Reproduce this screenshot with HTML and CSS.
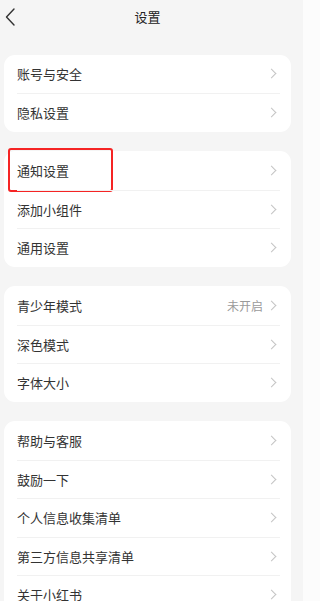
FILE: index.html
```html
<!DOCTYPE html>
<html lang="zh-CN">
<head>
<meta charset="utf-8">
<title>设置</title>
<link rel="stylesheet" href="styles.css">
</head>
<body>
<div class="page">
  <header class="header">
    <span class="back">
      <svg width="10" height="18" viewBox="0 0 10 18"><path d="M9 1 L1.5 9 L9 17" fill="none" stroke="#333" stroke-width="1.4" stroke-linecap="round" stroke-linejoin="round"/></svg>
    </span>
    <h1 class="title">设置</h1>
    <span></span>
  </header>
  <main class="list">
    <section class="card">
      <div class="row"><span class="label">账号与安全</span><span class="chev"></span></div>
      <div class="row"><span class="label">隐私设置</span><span class="chev"></span></div>
    </section>
    <section class="card">
      <div class="row marked"><span class="label">通知设置</span><span class="chev"></span><span class="mark"></span></div>
      <div class="row"><span class="label">添加小组件</span><span class="chev"></span></div>
      <div class="row"><span class="label">通用设置</span><span class="chev"></span></div>
    </section>
    <section class="card">
      <div class="row"><span class="label">青少年模式</span><span class="value">未开启</span><span class="chev"></span></div>
      <div class="row"><span class="label">深色模式</span><span class="chev"></span></div>
      <div class="row"><span class="label">字体大小</span><span class="chev"></span></div>
    </section>
    <section class="card">
      <div class="row"><span class="label">帮助与客服</span><span class="chev"></span></div>
      <div class="row"><span class="label">鼓励一下</span><span class="chev"></span></div>
      <div class="row"><span class="label">个人信息收集清单</span><span class="chev"></span></div>
      <div class="row"><span class="label">第三方信息共享清单</span><span class="chev"></span></div>
      <div class="row"><span class="label">关于小红书</span><span class="chev"></span></div>
    </section>
  </main>
</div>
<div class="edge"></div>
</body>
</html>
```
FILE: styles.css
```css
html, body {
  margin: 0;
  padding: 0;
  height: 601px;
  overflow: hidden;
}
body {
  display: flex;
  font-family: "Noto Sans CJK SC", "Noto Sans", sans-serif;
  color: #333;
}
.page {
  width: 303px;
  flex: none;
  background: #f5f5f5;
  padding: 0 12px 0 4px;
  box-sizing: border-box;
  min-height: 601px;
}
.edge {
  flex: 1;
  background: #fcfcfc;
}
.header {
  height: 34px;
  display: grid;
  grid-template-columns: 1fr auto 1fr;
  align-items: center;
}
.back {
  display: flex;
  margin-left: 1px;
}
.title {
  margin: 0;
  font-size: 13px;
  font-weight: normal;
  color: #222;
  line-height: 34px;
}
.list {
  padding-top: 20.5px;
  display: flex;
  flex-direction: column;
  gap: 19.5px;
}
.card {
  background: #fff;
  border-radius: 11px;
  padding: 0 11px 0 13px;
}
.row {
  height: 38.5px;
  box-sizing: border-box;
  display: flex;
  align-items: center;
  padding-right: 4px;
  font-size: 13px;
  position: relative;
}
.row + .row {
  border-top: 1px solid #f1f1f1;
}
.label {
  flex: 1;
  color: #333;
}
.value {
  font-size: 12px;
  color: #9a9a9a;
  margin-right: 5px;
}
.chev {
  width: 6px;
  height: 6px;
  border-top: 1px solid #c4c4c4;
  border-right: 1px solid #c4c4c4;
  transform: rotate(45deg);
  margin-right: 1px;
}
.mark {
  position: absolute;
  left: -9px;
  top: -3px;
  width: 105px;
  height: 44px;
  box-sizing: border-box;
  border: 2px solid #f52424;
  border-radius: 3px;
}
```
